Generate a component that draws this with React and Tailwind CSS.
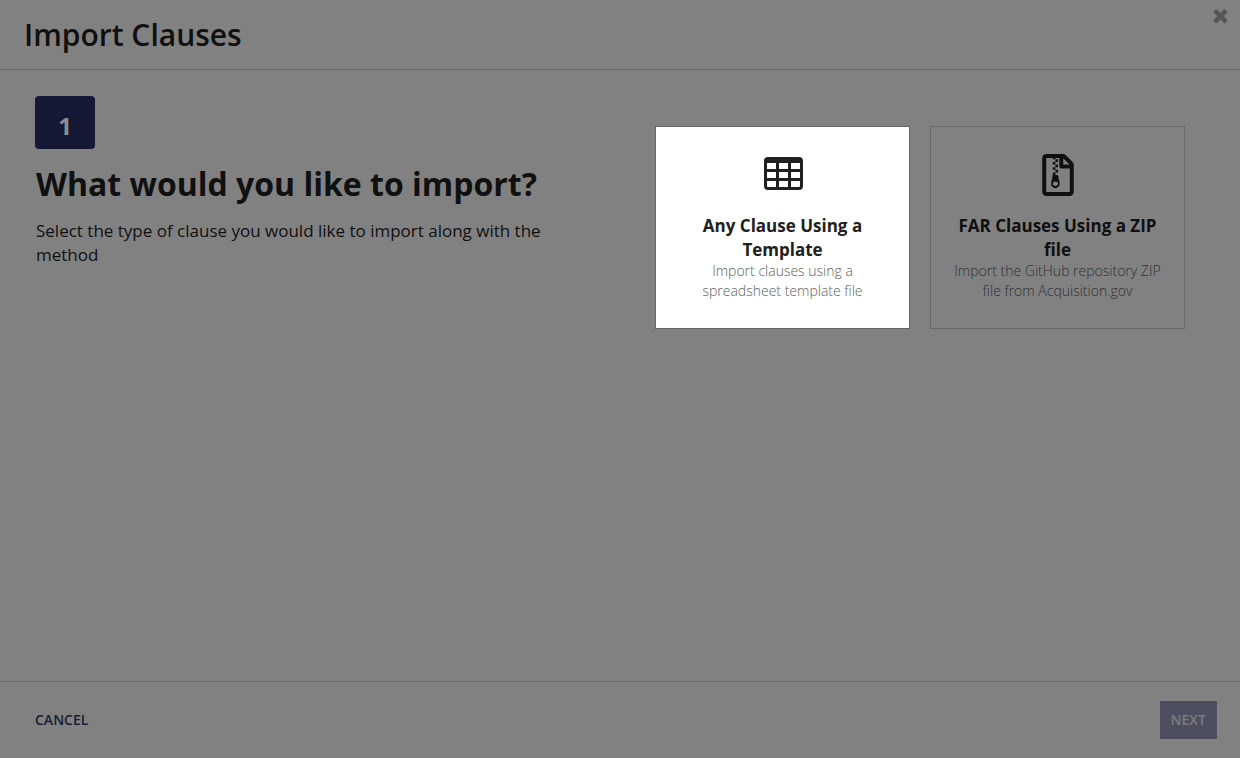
import React from 'react';
import { FaRegFileArchive } from 'react-icons/fa';

const CloseIcon = () => (
    <svg viewBox="0 0 1792 1792" className="w-[21px] h-[21px]" fill="currentColor" aria-hidden="true">
        <path d="M1490 1322q0 40-28 68l-136 136q-28 28-68 28t-68-28l-294-294-294 294q-28 28-68 28t-68-28l-136-136q-28-28-28-68t28-68l294-294-294-294q-28-28-28-68t28-68l136-136q28-28 68-28t68 28l294 294 294-294q28-28 68-28t68 28l136 136q28 28 28 68t-28 68l-294 294 294 294q28 28 28 68z" />
    </svg>
);

const TableIcon = () => (
    <svg viewBox="0 0 42 42" className="w-[42px] h-[42px]" fill="currentColor" aria-hidden="true">
        <path
            fillRule="evenodd"
            d="M6 3h31a4 4 0 0 1 4 4v25a4 4 0 0 1-4 4H6a4 4 0 0 1-4-4V7a4 4 0 0 1 4-4zM5 9v6h9V9zm12 0v6h9V9zm12 0v6h9V9zM5 18v6h9v-6zm12 0v6h9v-6zm12 0v6h9v-6zM5 27v5q0 1 1 1h8v-6zm12 0v6h9v-6zm12 0v6h8q1 0 1-1v-5z"
        />
    </svg>
);

const OptionCard = ({ icon, title, description, active }) => {
    return (
        <button
            type="button"
            className={
                active
                    ? 'flex-1 flex flex-col items-center border border-[#666666] bg-white px-5 pt-[27px] pb-[27px] text-[#202020]'
                    : 'flex-1 flex flex-col items-center border border-[#6b6b6b] px-5 pt-[27px] pb-[27px] text-[#101010]'
            }
        >
            {icon}
            <span className="mt-[18px] text-[17px] leading-6 font-bold">{title}</span>
            <span
                className={
                    active
                        ? '-mt-px text-sm leading-5 font-light text-[#606060]'
                        : '-mt-px text-sm leading-5 font-light text-[#303030]'
                }
            >
                {description}
            </span>
        </button>
    );
};

const App = () => {
    return (
        <div className="flex flex-col min-h-screen bg-[#818181] text-[#101010] font-['Open_Sans','Noto_Sans',sans-serif]">
            <header className="flex items-start justify-between border-b border-[#6b6b6b] pl-6 pr-[9px]">
                <h1 className="pt-[15px] pb-[14px] text-[30px] leading-10 font-semibold">Import Clauses</h1>
                <button type="button" aria-label="Close" className="mt-[5px] text-[#555555]">
                    <CloseIcon />
                </button>
            </header>

            <main className="flex-1 grid grid-cols-[620fr_530fr] pl-[35px] pr-[55px] pt-[26px]">
                <section className="pr-20">
                    <div className="flex items-center justify-center w-[60px] h-[53px] pt-[6px] rounded-[4px] bg-[#151834] text-2xl font-bold text-[#8d8d8d]">
                        1
                    </div>
                    <h2 className="mt-3 pl-px text-[32px] leading-[46px] font-bold">What would you like to import?</h2>
                    <p className="mt-3 pl-px text-[17px] leading-6">
                        Select the type of clause you would like to import along with the method
                    </p>
                </section>

                <section className="flex items-start gap-5 pt-[30px]">
                    <OptionCard
                        active
                        icon={<TableIcon />}
                        title="Any Clause Using a Template"
                        description="Import clauses using a spreadsheet template file"
                    />
                    <OptionCard
                        icon={<FaRegFileArchive size={42} />}
                        title="FAR Clauses Using a ZIP file"
                        description="Import the GitHub repository ZIP file from Acquisition.gov"
                    />
                </section>
            </main>

            <footer className="flex items-center justify-between border-t border-[#6b6b6b] pl-[35px] pr-[23px] pt-[19px] pb-[19px]">
                <button type="button" className="text-sm font-semibold text-[#191b3c]">
                    CANCEL
                </button>
                <button type="button" disabled className="h-[38px] px-[11px] bg-[#4d4e5f] text-sm font-semibold text-[#7c7c7c]">
                    NEXT
                </button>
            </footer>
        </div>
    );
};

export default App;
